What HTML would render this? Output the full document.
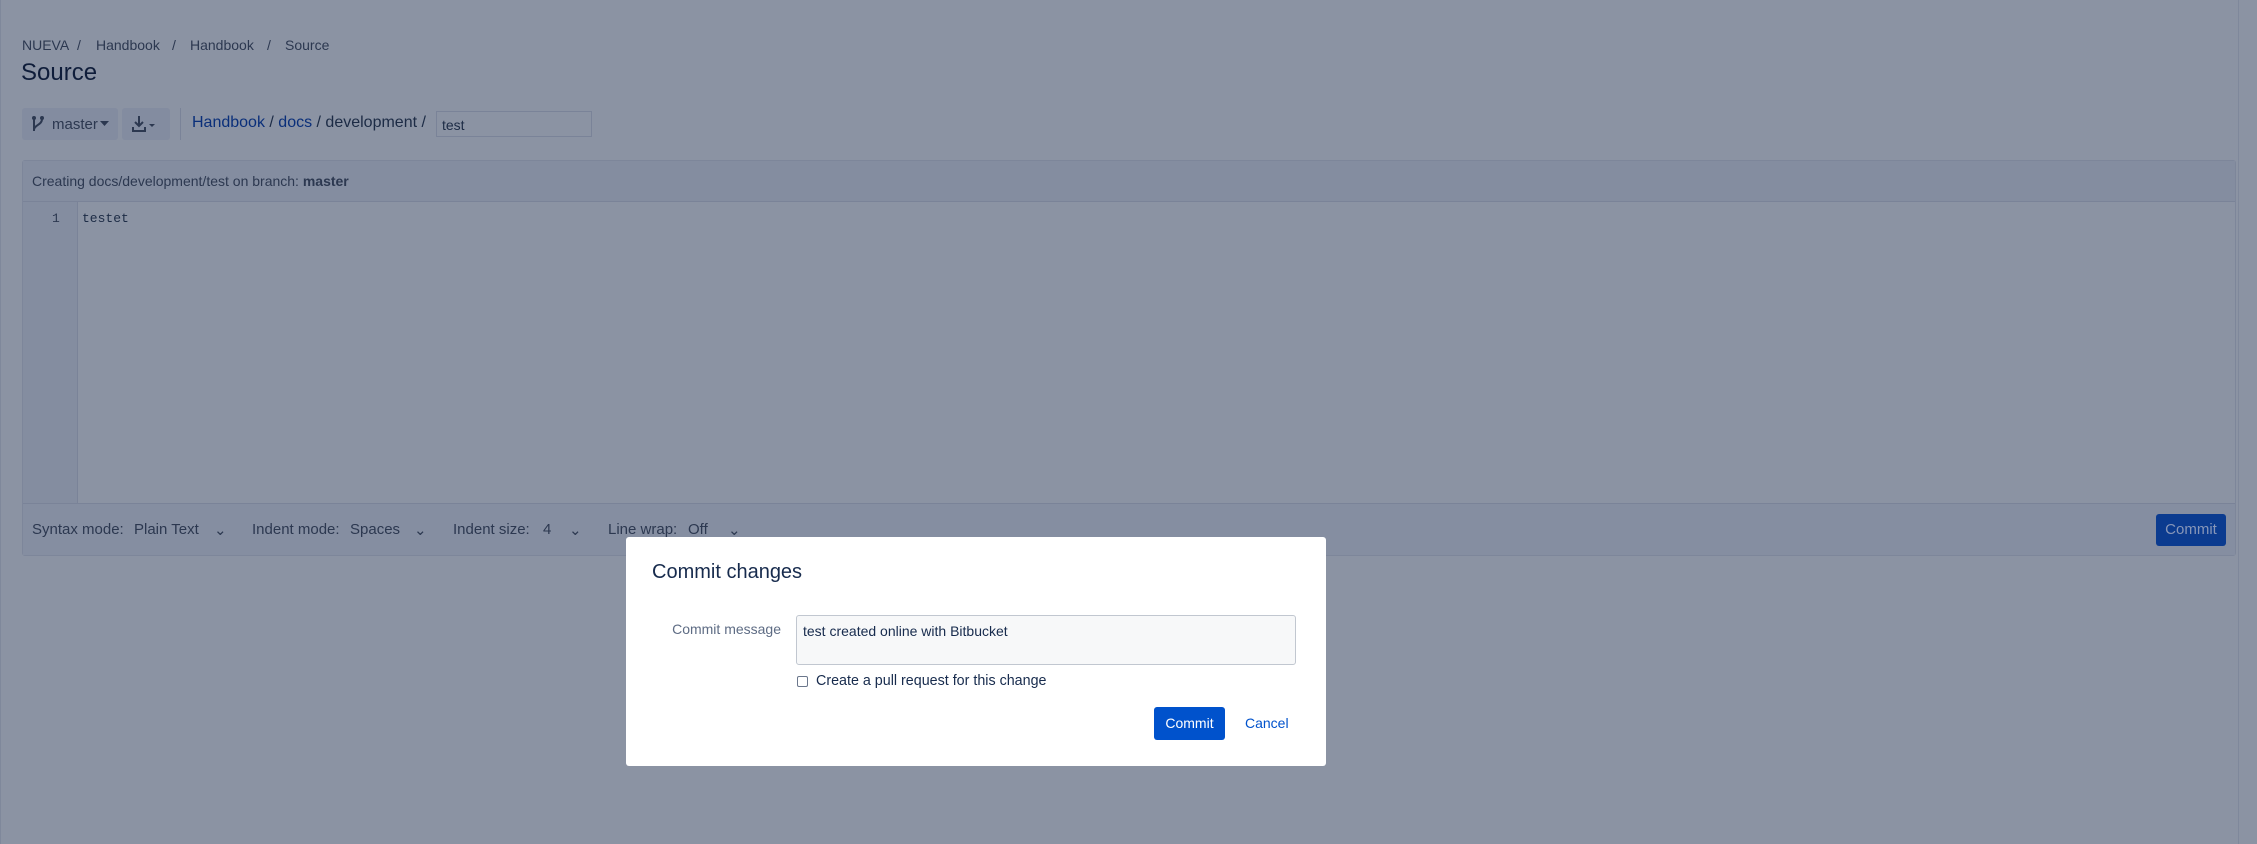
<!DOCTYPE html>
<html><head><meta charset="utf-8"><style>
*{box-sizing:border-box;margin:0;padding:0}
body{width:2257px;height:844px;overflow:hidden;background:#8b93a3;font-family:"Liberation Sans",sans-serif;color:#1c2b45;position:relative;font-size:14px}
.a{position:absolute;white-space:nowrap}
.lnk{color:#0a2f7a}
.f{position:absolute;top:521px;font-size:15px;color:#2c3850;white-space:nowrap}
.b{position:absolute;top:37px;font-size:14px;color:#2c3850;white-space:nowrap}
</style></head><body>
<div class="b" style="left:22px">NUEVA</div><div class="b" style="left:77px">/</div>
<div class="b" style="left:96px">Handbook</div><div class="b" style="left:172px">/</div>
<div class="b" style="left:190px">Handbook</div><div class="b" style="left:267px">/</div>
<div class="b" style="left:285px">Source</div>
<div class="a" style="left:21px;top:59px;font-size:24px;color:#0f1d3a">Source</div>
<div class="a" style="left:22px;top:108px;width:96px;height:32px;background:#838ca0;border-radius:3px"></div>
<svg class="a" style="left:31px;top:115px" width="14" height="18" viewBox="0 0 14 18"><circle cx="3" cy="3" r="2" fill="#2c3850"/><path d="M3 4v12M3 15c0-5 8-5 8-11" stroke="#2c3850" stroke-width="2" fill="none"/><circle cx="11" cy="3" r="2" fill="#2c3850"/></svg>
<div class="a" style="left:52px;top:116px;font-size:15px;color:#2c3850">master</div>
<svg class="a" style="left:100px;top:121px" width="9" height="6"><path d="M0 0h9L4.5 5z" fill="#2c3850"/></svg>
<div class="a" style="left:122px;top:108px;width:48px;height:32px;background:#838ca0;border-radius:3px"></div>
<svg class="a" style="left:131px;top:114px" width="32" height="20" viewBox="0 0 32 20"><path d="M8 2v10M4 8l4 4 4-4M2 13v4h12v-4" stroke="#2c3850" stroke-width="2" fill="none"/><path d="M18 10l3 3 3-3z" fill="#2c3850"/></svg>
<div class="a" style="left:180px;top:108px;width:1px;height:32px;background:#7a8398"></div>
<div class="a" style="left:192px;top:114px;font-size:16px;color:#1c2b45"><span class="lnk">Handbook</span> / <span class="lnk">docs</span> / development /</div>
<div class="a" style="left:436px;top:111px;width:156px;height:26px;border:1px solid #7a8398;font-size:14px;padding:5px 5px">test</div>
<div class="a" style="left:22px;top:160px;width:2214px;height:396px;border:1px solid #7d869a;border-radius:3px"></div>
<div class="a" style="left:23px;top:161px;width:2212px;height:41px;background:#848da0;border-bottom:1px solid #7a8398"></div>
<div class="a" style="left:32px;top:173px;font-size:14px;color:#2c3850">Creating docs/development/test on branch: <b>master</b></div>
<div class="a" style="left:23px;top:202px;width:55px;height:301px;background:#848da0;border-right:1px solid #7a8398"></div>
<div class="a" style="left:52px;top:211px;font-family:'Liberation Mono',monospace;font-size:13px;color:#2c3850">1</div>
<div class="a" style="left:82px;top:211px;font-family:'Liberation Mono',monospace;font-size:13px;color:#1c2b45">testet</div>
<div class="a" style="left:23px;top:503px;width:2212px;height:52px;background:#858ea1;border-top:1px solid #7a8398"></div>
<div class="f" style="left:32px">Syntax mode:</div><div class="f" style="left:134px">Plain Text</div><div class="f" style="left:214px">⌄</div>
<div class="f" style="left:252px">Indent mode:</div><div class="f" style="left:350px">Spaces</div><div class="f" style="left:414px">⌄</div>
<div class="f" style="left:453px">Indent size:</div><div class="f" style="left:543px">4</div><div class="f" style="left:569px">⌄</div>
<div class="f" style="left:608px">Line wrap:</div><div class="f" style="left:688px">Off</div><div class="f" style="left:728px">⌄</div>
<div class="a" style="left:2156px;top:514px;width:70px;height:32px;background:#0b3b8f;border-radius:3px;color:#8796b8;font-size:15px;text-align:center;line-height:32px">Commit</div>
<div class="a" style="left:2238px;top:0;width:1px;height:844px;background:#7f889b"></div>
<div class="a" style="left:0;top:0;width:1px;height:844px;background:#7f889b"></div>

<div class="a" style="left:626px;top:537px;width:700px;height:229px;background:#fff;border-radius:3px"></div>
<div class="a" style="left:652px;top:561px;font-size:20px;color:#172b4d">Commit changes</div>
<div class="a" style="left:620px;top:621px;width:161px;text-align:right;font-size:14px;color:#5e6c84">Commit message</div>
<div class="a" style="left:796px;top:615px;width:500px;height:50px;background:#f7f8f9;border:1px solid #c1c7d0;border-radius:3px;font-size:14px;padding:7px 6px;color:#172b4d">test created online with Bitbucket</div>
<div class="a" style="left:797px;top:676px;width:11px;height:11px;border:1px solid #6b778c;border-radius:2px"></div>
<div class="a" style="left:816px;top:673px;font-size:14.3px;color:#172b4d">Create a pull request for this change</div>
<div class="a" style="left:1154px;top:707px;width:71px;height:33px;background:#0052cc;border-radius:3px;color:#fff;font-size:14px;text-align:center;line-height:33px">Commit</div>
<div class="a" style="left:1245px;top:715px;font-size:14px;color:#0052cc">Cancel</div>
</body></html>
